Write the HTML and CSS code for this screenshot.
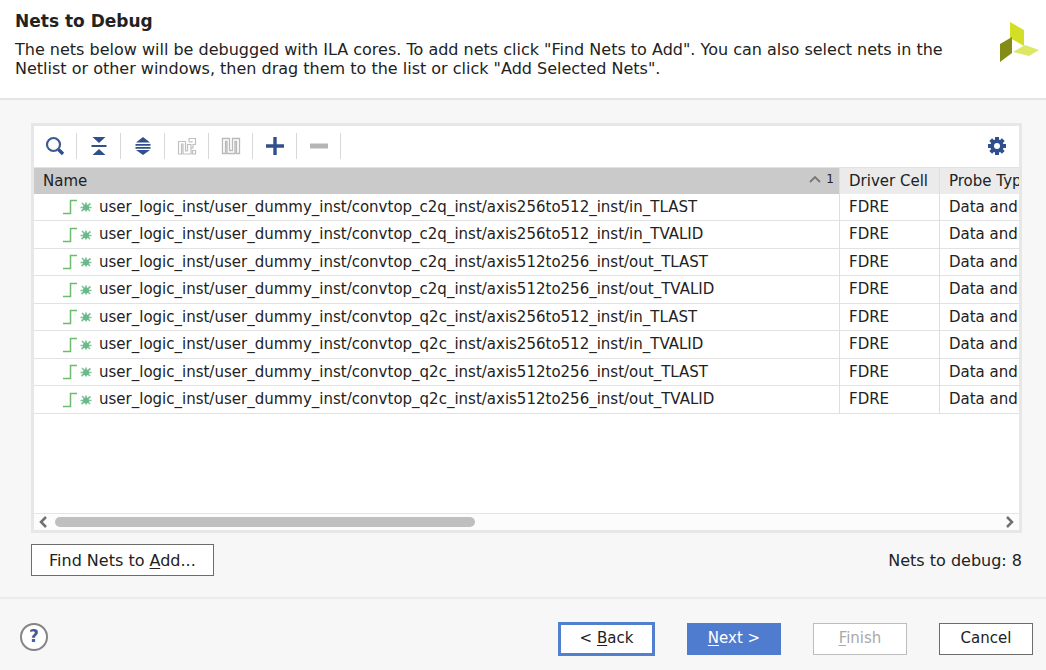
FILE: index.html
```html
<!DOCTYPE html>
<html lang="en">
<head>
<meta charset="utf-8">
<title>Nets to Debug</title>
<link rel="stylesheet" href="styles.css">
</head>
<body>
<header class="intro">
  <div class="intro-text">
    <h1>Nets to Debug</h1>
    <p>The nets below will be debugged with ILA cores. To add nets click "Find Nets to Add". You can also select nets in the Netlist or other windows, then drag them to the list or click "Add Selected Nets".</p>
  </div>
  <svg class="logo" viewBox="0 0 40 40" aria-hidden="true">
    <path d="M11 0 25 8V24L11 16Z" fill="#d3df27"/>
    <path d="M13 15V31L1 40V22Z" fill="#848c16"/>
    <path d="M14 30 26 23 40 28 30 34Z" fill="#dde765"/>
  </svg>
</header>

<main class="content">
  <section class="panel">
    <div class="toolbar">
      <button class="tool" aria-label="Search"><svg viewBox="0 0 20 20"><circle cx="8.5" cy="8.5" r="6.5" fill="none" stroke="#3c5a94" stroke-width="2.200"/><path d="m13.500 13.500 4.500 4.500" stroke="#30508d" stroke-width="3.400"/></svg></button>
      <button class="tool" aria-label="Collapse all"><svg viewBox="0 0 20 20" fill="#30508d"><path d="M3.500 1h13L10 7ZM2.500 9h15v2h-15ZM10 13l6.500 6h-13Z"/></svg></button>
      <button class="tool" aria-label="Expand all"><svg viewBox="0 0 20 20" fill="#30508d"><path d="m10 1 7 5.500H3ZM2.500 8h15v1.800h-15ZM2.500 11h15v1.800h-15ZM3 14h14l-7 5Z"/></svg></button>
      <button class="tool" aria-label="Unknown probes" disabled><svg viewBox="0 0 20 20" fill="none" stroke="#c0c0c0" stroke-width="1.200"><path d="M1.500 18V5.500h7v9.500h2V8.500h3.500V18H6V8H4.500v10ZM12 6V2.500h6.500v6h-2.500v3.500h-2M12 6h3v-1M15.500 14.500h3V18h-3Z"/></svg></button>
      <button class="tool" aria-label="Probe signal" disabled><svg viewBox="0 0 20 20" fill="none" stroke="#b9b9b9" stroke-width="1.300"><path d="M1.500 17.500V2.500h7v12h3v-12h7v15h-3v-12h-1.500v12h-8v-12H4.500v12Z"/></svg></button>
      <button class="tool" aria-label="Add"><svg viewBox="0 0 20 20"><path d="M10 1v18M1 10h18" stroke="#30508d" stroke-width="3.400"/></svg></button>
      <button class="tool" aria-label="Remove" disabled><svg viewBox="0 0 20 20"><path d="M1 10h18" stroke="#b5b5b5" stroke-width="5"/></svg></button>
      <button class="tool settings" aria-label="Settings"><svg viewBox="0 0 20 20"><g stroke="#30508d" stroke-width="4"><path d="M10 1v18M1 10h18M3.700 3.700l12.600 12.600M16.300 3.700 3.700 16.300"/></g><circle cx="10" cy="10" r="6.700" fill="#30508d"/><circle cx="10" cy="10" r="3" fill="#fff"/></svg></button>
    </div>
    <div class="table-view">
      <table class="nets">
        <colgroup><col class="col-name"><col class="col-cell"><col class="col-type"></colgroup>
        <thead>
          <tr><th class="sorted"><span class="sort-head">Name<span class="sort"><svg viewBox="0 0 12 8"><path d="m1 7 5-5 5 5" fill="none" stroke="#777" stroke-width="1.800"/></svg>1</span></span></th><th>Driver Cell</th><th>Probe Type</th></tr>
        </thead>
        <tbody>
          <tr><td><span class="net"><svg viewBox="0 0 32 18"><use href="#net-icon"/></svg>user_logic_inst/user_dummy_inst/convtop_c2q_inst/axis256to512_inst/in_TLAST</span></td><td>FDRE</td><td>Data and Trigger</td></tr>
          <tr><td><span class="net"><svg viewBox="0 0 32 18"><use href="#net-icon"/></svg>user_logic_inst/user_dummy_inst/convtop_c2q_inst/axis256to512_inst/in_TVALID</span></td><td>FDRE</td><td>Data and Trigger</td></tr>
          <tr><td><span class="net"><svg viewBox="0 0 32 18"><use href="#net-icon"/></svg>user_logic_inst/user_dummy_inst/convtop_c2q_inst/axis512to256_inst/out_TLAST</span></td><td>FDRE</td><td>Data and Trigger</td></tr>
          <tr><td><span class="net"><svg viewBox="0 0 32 18"><use href="#net-icon"/></svg>user_logic_inst/user_dummy_inst/convtop_c2q_inst/axis512to256_inst/out_TVALID</span></td><td>FDRE</td><td>Data and Trigger</td></tr>
          <tr><td><span class="net"><svg viewBox="0 0 32 18"><use href="#net-icon"/></svg>user_logic_inst/user_dummy_inst/convtop_q2c_inst/axis256to512_inst/in_TLAST</span></td><td>FDRE</td><td>Data and Trigger</td></tr>
          <tr><td><span class="net"><svg viewBox="0 0 32 18"><use href="#net-icon"/></svg>user_logic_inst/user_dummy_inst/convtop_q2c_inst/axis256to512_inst/in_TVALID</span></td><td>FDRE</td><td>Data and Trigger</td></tr>
          <tr><td><span class="net"><svg viewBox="0 0 32 18"><use href="#net-icon"/></svg>user_logic_inst/user_dummy_inst/convtop_q2c_inst/axis512to256_inst/out_TLAST</span></td><td>FDRE</td><td>Data and Trigger</td></tr>
          <tr><td><span class="net"><svg viewBox="0 0 32 18"><use href="#net-icon"/></svg>user_logic_inst/user_dummy_inst/convtop_q2c_inst/axis512to256_inst/out_TVALID</span></td><td>FDRE</td><td>Data and Trigger</td></tr>
        </tbody>
      </table>
    </div>
    <div class="scrollbar">
      <button class="arrow" aria-label="Scroll left"><svg viewBox="0 0 10 14"><path d="M8 2 3 7l5 5"/></svg></button>
      <div class="track"><div class="thumb"></div></div>
      <button class="arrow" aria-label="Scroll right"><svg viewBox="0 0 10 14"><path d="m2 2 5 5-5 5"/></svg></button>
    </div>
  </section>
  <div class="summary">
    <button class="btn find"><span>Find Nets to <u>A</u>dd...</span></button>
    <span>Nets to debug: 8</span>
  </div>
</main>

<footer class="actions">
  <button class="help" aria-label="Help">?</button>
  <div class="steps">
    <button class="btn back"><span>&lt; <u>B</u>ack</span></button>
    <button class="btn next"><span><u>N</u>ext &gt;</span></button>
    <button class="btn" disabled><span><u>F</u>inish</span></button>
    <button class="btn"><span>Cancel</span></button>
  </div>
</footer>

<svg class="defs" aria-hidden="true">
  <symbol id="net-icon" viewBox="0 0 32 18">
    <path d="M1 15.500h7.500v-13H15" fill="none" stroke="#6dbb6d" stroke-width="1.500"/>
    <path d="M24 4.500v9M20 5l8 8M28.500 5.500 19.500 13M18.500 9.500h11" fill="none" stroke="#7cc497" stroke-width="1.700"/>
    <ellipse cx="24" cy="9.500" rx="3" ry="3" fill="#69b98a"/>
  </symbol>
</svg>
</body>
</html>
```
FILE: styles.css
```css
* { box-sizing: border-box; }
body {
  margin: 0;
  min-height: 100vh;
  display: flex;
  flex-direction: column;
  background: #f7f7f7;
  color: #222;
  font: 15px/19px "DejaVu Sans", sans-serif;
}
button { font: inherit; color: inherit; cursor: pointer; }
button:disabled { cursor: default; }
svg { display: block; }
u { text-underline-offset: 2px; }

.intro {
  display: flex;
  justify-content: space-between;
  height: 100px;
  padding: 11px 7px 0 15px;
  background: #fff;
  border-bottom: 2px solid #e5e5e5;
}
.intro-text { max-width: 950px; }
.intro h1 { margin: 0 0 9px; font-size: 17px; line-height: 20px; }
.intro p { margin: 0; font-size: 16px; }
.logo { width: 40px; height: 40px; margin-top: 11px; flex: none; }

.content {
  flex: 1;
  display: flex;
  flex-direction: column;
  padding: 23px 24px 21px 31px;
}
.panel {
  flex: 1;
  display: flex;
  flex-direction: column;
  background: #fff;
  border: 3px solid #e7e7e7;
}
.toolbar {
  display: flex;
  align-items: center;
  height: 42px;
  padding-bottom: 2px;
  border-bottom: 1px solid #e2e2e2;
}
.tool {
  display: flex;
  align-items: center;
  justify-content: center;
  width: 44px;
  height: 26px;
  padding: 0;
  border: 0;
  border-right: 1px solid #d8d8d8;
  background: none;
}
.tool:first-child { width: 43px; }
.tool svg { width: 20px; height: 20px; }
.tool.settings { margin-left: auto; border: 0; }

.table-view { flex: 1; overflow: hidden; }
.nets {
  width: calc(100% + 1200px);
  table-layout: fixed;
  border-collapse: separate;
  border-spacing: 0;
}
.col-cell { width: 100px; }
.col-type { width: 1279px; }
.nets th, .nets td {
  padding: 0 9px;
  border-right: 1px solid #dedede;
  border-bottom: 1px solid #e2e2e2;
  font-weight: 400;
  text-align: left;
  white-space: nowrap;
}
.nets th { height: 26px; background: #ebebeb; border-bottom: 0; }
.nets th.sorted { background: #cacaca; }
.nets td { height: 27px; }
.nets tr:nth-child(even) td { height: 28px; }
.sort-head { display: flex; justify-content: space-between; }
.sort { display: flex; gap: 5px; font-size: 12px; line-height: 14px; margin-right: -4px; }
.sort svg { width: 12px; height: 8px; margin-top: 3px; }
.net { display: flex; align-items: center; gap: 5px; padding-left: 19px; }
.net svg { width: 32px; height: 18px; }

.scrollbar {
  display: flex;
  align-items: center;
  height: 17px;
  padding: 0 4px;
  background: #fcfcfc;
  border-top: 1px solid #e5e5e5;
}
.arrow { padding: 0; border: 0; background: none; }
.arrow svg { width: 10px; height: 14px; fill: none; stroke: #707070; stroke-width: 2.500; }
.track { flex: 1; padding: 0 7px; }
.thumb { width: 44.500%; height: 10px; border-radius: 5px; background: #bfbfbf; }

.summary {
  display: flex;
  align-items: center;
  justify-content: space-between;
  margin-top: 11px;
  font-size: 16px;
}
.btn {
  min-width: 94px;
  height: 32px;
  padding: 0 17px;
  background: #fff;
  border: 1px solid #6c6c6c;
}
.btn.back { min-width: 97px; height: 34px; border: 3px solid #5280cf; }
.btn.next { background: #4f7ccf; border-color: #4f7ccf; color: #fff; }
.btn:disabled { color: #a9a9a9; border-color: #bdbdbd; }

.actions {
  display: flex;
  align-items: center;
  justify-content: space-between;
  height: 73px;
  padding: 8px 13px 0 20px;
  border-top: 2px solid #ebebeb;
}
.help {
  width: 28px;
  height: 28px;
  margin-bottom: 4px;
  padding: 0;
  border: 2px solid #858585;
  border-radius: 50%;
  background: #fff;
  color: #3f5b9b;
  font-size: 17px;
  font-weight: 700;
}
.steps { display: flex; align-items: center; gap: 32px; }
.defs { position: absolute; width: 0; height: 0; }
```
